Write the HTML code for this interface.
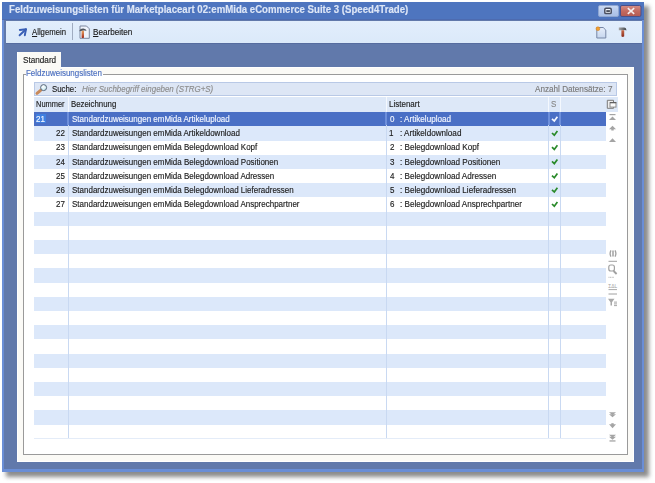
<!DOCTYPE html>
<html><head><meta charset="utf-8">
<style>
*{margin:0;padding:0;box-sizing:border-box}
html,body{width:655px;height:483px;overflow:hidden;background:#fff;font-family:"Liberation Sans",sans-serif}
.a{position:absolute}
.t{white-space:nowrap;transform-origin:0 0;-webkit-text-stroke:0.15px currentColor}
svg{position:absolute;overflow:visible}
</style></head><body>
<div class="a" style="left:6px;top:6px;width:643px;height:471px;background:#808080;filter:blur(2px);opacity:.9"></div>
<div class="a" style="left:2px;top:2px;width:642px;height:470px;background:#6a8ed6;"></div>
<div class="a" style="left:4px;top:20px;width:638px;height:449px;background:#6179ab;"></div>
<div class="a" style="left:2px;top:2px;width:642px;height:18px;background:#4e75bf;"></div>
<svg style="left:0;top:0" width="655" height="483" viewBox="0 0 655 483"><defs><linearGradient id="rb" x1="0" y1="0" x2="0" y2="1"><stop offset="0" stop-color="#cbdaf2"/><stop offset=".5" stop-color="#b6c9ec"/><stop offset="1" stop-color="#a9bfe6"/></linearGradient><linearGradient id="cb" x1="0" y1="0" x2="0" y2="1"><stop offset="0" stop-color="#d48f86"/><stop offset=".5" stop-color="#c46a60"/><stop offset="1" stop-color="#b35a52"/></linearGradient></defs><rect x="598.5" y="5.5" width="20" height="11" rx="1.5" fill="url(#rb)" stroke="#8fa6d2" stroke-width="1"/><rect x="604.8" y="8.3" width="6.4" height="5.3" rx="1.2" fill="#f2f6fc" stroke="#4a4f60" stroke-width="1.5"/><rect x="606.3" y="10.2" width="3.6" height="1.7" fill="#3a3f4c"/><rect x="620.5" y="5.5" width="20.5" height="11" rx="1.5" fill="url(#cb)" stroke="#49508a" stroke-width="1"/><path d="M627.8 8.2 L634.2 13.8 M634.2 8.2 L627.8 13.8" stroke="#f6eeee" stroke-width="1.6"/></svg>
<div class="a" style="left:6px;top:21px;width:636px;height:22px;background:linear-gradient(#e2eefc,#dbe9f9);"></div>
<div class="a" style="left:6px;top:43px;width:636px;height:1px;background:#566c9f;"></div>
<div class="a" style="left:2px;top:19px;width:642px;height:1px;background:#4d6bb0;"></div>
<svg style="left:0;top:0" width="655" height="483" viewBox="0 0 655 483"><path d="M26 29.3 L19.6 35.3" stroke="#3a5fb5" stroke-width="1.9" stroke-linecap="round"/><path d="M19.8 30 L26 29.2 L24.8 35.2" stroke="#3a5fb5" stroke-width="1.9" fill="none" stroke-linecap="round" stroke-linejoin="round"/></svg>
<div class="a" style="left:72px;top:23px;width:1px;height:17px;background:#a0acc0;"></div>
<svg style="left:0;top:0" width="655" height="483" viewBox="0 0 655 483"><defs><linearGradient id="hd" x1="0" y1="0" x2="0" y2="1"><stop offset="0" stop-color="#e8a060"/><stop offset="1" stop-color="#a02818"/></linearGradient></defs><path d="M80 26 H86.5 L89.3 28.8 V38.3 H80 Z" fill="#eef3fb" stroke="#7b879e" stroke-width="1"/><path d="M79.5 30.5 Q80.5 28.2 83.5 28.5 Q86 28.6 86.6 31 Q85.5 30.2 84 30.6 L79.5 31.2 Z" fill="#4f565e"/><path d="M81.6 30.8 H84 V37.6 Q82.8 38.6 81.6 37.6 Z" fill="url(#hd)"/></svg>
<svg style="left:0;top:0" width="655" height="483" viewBox="0 0 655 483"><defs><linearGradient id="nd" x1="0" y1="0" x2="0" y2="1"><stop offset="0" stop-color="#e6eefa"/><stop offset="1" stop-color="#c6d6ee"/></linearGradient></defs><path d="M596.8 27.5 H603.2 L605.8 30.1 V38 H596.8 Z" fill="url(#nd)" stroke="#7787a6" stroke-width="1"/><circle cx="597.9" cy="28.7" r="1.9" fill="#f0a030" stroke="#d07818" stroke-width=".5"/></svg>
<svg style="left:0;top:0" width="655" height="483" viewBox="0 0 655 483"><defs><linearGradient id="hm" x1="0" y1="0" x2="0" y2="1"><stop offset="0" stop-color="#c86a48"/><stop offset="1" stop-color="#8a2c1c"/></linearGradient><linearGradient id="hh" x1="0" y1="0" x2="1" y2="0"><stop offset="0" stop-color="#a8a8a8"/><stop offset="1" stop-color="#404448"/></linearGradient></defs><path d="M618.8 27.6 H624 Q626.4 27.6 626.4 30.6 Q625.4 29.6 623.6 30.3 H618.8 Z" fill="url(#hh)"/><path d="M621.4 30.2 H624.2 V36.2 Q622.8 37.6 621.4 36.2 Z" fill="url(#hm)"/></svg>
<div class="a" style="left:17px;top:67px;width:617px;height:395px;background:#fbfaf6;"></div>
<div class="a" style="left:17px;top:52px;width:44px;height:16px;background:#fbfaf6;"></div>
<div class="a" style="left:61px;top:67px;width:573px;height:1px;background:#ffffff;"></div>
<div class="a" style="left:17px;top:67px;width:1px;height:395px;background:#ffffff;"></div>
<div class="a" style="left:633px;top:67px;width:1px;height:395px;background:#ffffff;"></div>
<div class="a" style="left:17px;top:461px;width:617px;height:1px;background:#ffffff;"></div>
<div class="a" style="left:17px;top:52px;width:1px;height:15px;background:#ffffff;"></div>
<div class="a" style="left:23px;top:74px;width:604px;height:380px;background:#ffffff;"></div>
<div class="a" style="left:23px;top:74px;width:1px;height:380px;background:#9a9a9a;"></div>
<div class="a" style="left:23px;top:454px;width:605px;height:1px;background:#9a9a9a;"></div>
<div class="a" style="left:627px;top:74px;width:1px;height:381px;background:#9a9a9a;"></div>
<div class="a" style="left:23px;top:74px;width:3px;height:1px;background:#9a9a9a;"></div>
<div class="a" style="left:102.5px;top:74px;width:524.5px;height:1px;background:#9a9a9a;"></div>
<div class="a" style="left:34px;top:82px;width:583px;height:13.5px;background:#dde6f5;border:1px solid #b9c9e6"></div>
<svg style="left:0;top:0" width="655" height="483" viewBox="0 0 655 483"><defs><radialGradient id="lens" cx=".4" cy=".35" r=".7"><stop offset="0" stop-color="#ffffff"/><stop offset="1" stop-color="#bfe6ee"/></radialGradient></defs><path d="M40.6 90.4 L37 93.4" stroke="#c98a5a" stroke-width="3" stroke-linecap="round"/><circle cx="43.6" cy="87.6" r="3" fill="url(#lens)" stroke="#5a6678" stroke-width="1"/></svg>
<div class="a" style="left:34px;top:96.5px;width:572px;height:343px;background:#fff;"></div>
<div class="a" style="left:34px;top:97px;width:584px;height:15px;background:#dde8f8;"></div>
<div class="a" style="left:34px;top:112.2px;width:572px;height:14.2px;background:#4a6fc5;"></div>
<div class="a" style="left:34px;top:126.4px;width:572px;height:14.2px;background:#dce8fa;"></div>
<div class="a" style="left:34px;top:140.6px;width:572px;height:14.2px;background:#ffffff;"></div>
<div class="a" style="left:34px;top:154.8px;width:572px;height:14.2px;background:#dce8fa;"></div>
<div class="a" style="left:34px;top:169.0px;width:572px;height:14.2px;background:#ffffff;"></div>
<div class="a" style="left:34px;top:183.2px;width:572px;height:14.2px;background:#dce8fa;"></div>
<div class="a" style="left:34px;top:197.4px;width:572px;height:14.2px;background:#ffffff;"></div>
<div class="a" style="left:34px;top:211.6px;width:572px;height:14.2px;background:#dce8fa;"></div>
<div class="a" style="left:34px;top:225.8px;width:572px;height:14.2px;background:#ffffff;"></div>
<div class="a" style="left:34px;top:240.0px;width:572px;height:14.2px;background:#dce8fa;"></div>
<div class="a" style="left:34px;top:254.2px;width:572px;height:14.2px;background:#ffffff;"></div>
<div class="a" style="left:34px;top:268.4px;width:572px;height:14.2px;background:#dce8fa;"></div>
<div class="a" style="left:34px;top:282.6px;width:572px;height:14.2px;background:#ffffff;"></div>
<div class="a" style="left:34px;top:296.8px;width:572px;height:14.2px;background:#dce8fa;"></div>
<div class="a" style="left:34px;top:311.0px;width:572px;height:14.2px;background:#ffffff;"></div>
<div class="a" style="left:34px;top:325.2px;width:572px;height:14.2px;background:#dce8fa;"></div>
<div class="a" style="left:34px;top:339.4px;width:572px;height:14.2px;background:#ffffff;"></div>
<div class="a" style="left:34px;top:353.6px;width:572px;height:14.2px;background:#dce8fa;"></div>
<div class="a" style="left:34px;top:367.8px;width:572px;height:14.2px;background:#ffffff;"></div>
<div class="a" style="left:34px;top:382.0px;width:572px;height:14.2px;background:#dce8fa;"></div>
<div class="a" style="left:34px;top:396.2px;width:572px;height:14.2px;background:#ffffff;"></div>
<div class="a" style="left:34px;top:410.4px;width:572px;height:14.2px;background:#dce8fa;"></div>
<div class="a" style="left:34px;top:424.6px;width:572px;height:14.2px;background:#ffffff;"></div>
<div class="a" style="left:68px;top:112.2px;width:1px;height:326.59999999999997px;background:#c9d9f2;"></div>
<div class="a" style="left:68px;top:97px;width:1px;height:15px;background:#f4f8fe;"></div>
<div class="a" style="left:386px;top:112.2px;width:1px;height:326.59999999999997px;background:#c9d9f2;"></div>
<div class="a" style="left:386px;top:97px;width:1px;height:15px;background:#f4f8fe;"></div>
<div class="a" style="left:548px;top:112.2px;width:1px;height:326.59999999999997px;background:#c9d9f2;"></div>
<div class="a" style="left:548px;top:97px;width:1px;height:15px;background:#f4f8fe;"></div>
<div class="a" style="left:560px;top:112.2px;width:1px;height:326.59999999999997px;background:#c9d9f2;"></div>
<div class="a" style="left:560px;top:97px;width:1px;height:15px;background:#f4f8fe;"></div>
<div class="a" style="left:67px;top:112px;width:2px;height:12.5px;background:#6d8fdb;"></div>
<div class="a" style="left:385px;top:112px;width:2px;height:12.5px;background:#6d8fdb;"></div>
<div class="a" style="left:548px;top:112px;width:2px;height:12.5px;background:#6d8fdb;"></div>
<div class="a" style="left:559px;top:112px;width:2px;height:12.5px;background:#6d8fdb;"></div>
<div class="a" style="left:34px;top:438.29999999999995px;width:572px;height:1px;background:#e4ecf8;"></div>
<div class="a" style="left:35.7px;top:113.7px;width:10.5px;height:9.5px;background:#3f7fe0;"></div>
<svg style="left:0;top:0" width="655" height="483" viewBox="0 0 655 483"><path d="M552 118.80 L554.3 121.00 L557.4 116.80" stroke="#f4f7ff" stroke-width="1.7" fill="none"/></svg>
<svg style="left:0;top:0" width="655" height="483" viewBox="0 0 655 483"><path d="M552 133.00 L554.3 135.20 L557.4 131.00" stroke="#2a8a2a" stroke-width="1.7" fill="none"/></svg>
<svg style="left:0;top:0" width="655" height="483" viewBox="0 0 655 483"><path d="M552 147.20 L554.3 149.40 L557.4 145.20" stroke="#2a8a2a" stroke-width="1.7" fill="none"/></svg>
<svg style="left:0;top:0" width="655" height="483" viewBox="0 0 655 483"><path d="M552 161.40 L554.3 163.60 L557.4 159.40" stroke="#2a8a2a" stroke-width="1.7" fill="none"/></svg>
<svg style="left:0;top:0" width="655" height="483" viewBox="0 0 655 483"><path d="M552 175.60 L554.3 177.80 L557.4 173.60" stroke="#2a8a2a" stroke-width="1.7" fill="none"/></svg>
<svg style="left:0;top:0" width="655" height="483" viewBox="0 0 655 483"><path d="M552 189.80 L554.3 192.00 L557.4 187.80" stroke="#2a8a2a" stroke-width="1.7" fill="none"/></svg>
<svg style="left:0;top:0" width="655" height="483" viewBox="0 0 655 483"><path d="M552 204.00 L554.3 206.20 L557.4 202.00" stroke="#2a8a2a" stroke-width="1.7" fill="none"/></svg>
<svg style="left:0;top:0" width="655" height="483" viewBox="0 0 655 483"><path d="M607.3 100.3 H613.5 V108.3 H607.3 Z" fill="#ededed" stroke="#7a7a7a" stroke-width="1"/><rect x="610" y="102.5" width="6" height="4.6" fill="#fcfcfc" stroke="#8a8a8a" stroke-width="1"/><rect x="610" y="102" width="6.2" height="1.3" fill="#606060"/></svg>
<svg style="left:0;top:0" width="655" height="483" viewBox="0 0 655 483"><g fill="#a4a4a4"><rect x="609.5" y="114" width="6" height="1.2"/><path d="M609 120 L612.5 116.5 L616 120Z"/><path d="M609 129.3 L612.5 125.8 L616 129.3Z"/><rect x="611.3" y="128.5" width="2.4" height="2"/><path d="M609 142 L612.5 138.3 L616 142Z"/></g></svg>
<svg style="left:0;top:0" width="655" height="483" viewBox="0 0 655 483"><g fill="none" stroke="#a0a0a0"><path d="M611 250.3 Q609.2 253.4 611 256.6" stroke-width="1.3"/><path d="M615 250.3 Q616.8 253.4 615 256.6" stroke-width="1.3"/><path d="M613 250.5 V256.5" stroke-width="1.5"/><path d="M608.5 261.3 H617" stroke-width="1"/><rect x="608.8" y="265" width="5.6" height="6" rx="2" stroke-width="1.2"/><path d="M613.6 271 L616.6 274" stroke-width="1.8"/><path d="M608.5 277.3 H614" stroke-width=".8" stroke-dasharray="1 .6"/><path d="M608.5 294 H617" stroke-width="1"/><path d="M608.5 289.6 H617" stroke-width=".9"/></g><text x="608.2" y="288" font-size="5.6" fill="#a0a0a0" font-family="Liberation Sans" textLength="9" lengthAdjust="spacingAndGlyphs">ΣΔL</text><path d="M608 298.8 H614.5 L612 302.3 V305.6 H610.5 V302.3 Z" fill="#a8a8a8"/><g fill="#a8a8a8"><rect x="614" y="301.6" width="3" height="1"/><rect x="614" y="303.4" width="3" height="1"/><rect x="614" y="305.1" width="3" height="1"/></g></svg>
<svg style="left:0;top:0" width="655" height="483" viewBox="0 0 655 483"><g fill="#a4a4a4"><path d="M609 412.3 L612.5 415.3 L616 412.3Z"/><path d="M609 414.3 L612.5 417.3 L616 414.3Z"/><path d="M609 424.3 L612.5 428.3 L616 424.3Z"/><rect x="611.3" y="423.2" width="2.4" height="2"/><path d="M609 434.8 L612.5 437.8 L616 434.8Z"/><path d="M609 436.8 L612.5 439.8 L616 436.8Z"/><rect x="609.5" y="440.3" width="6" height="1.3"/></g></svg>
<div class="a t" style="left:9.12px;top:5.00px;font-size:10.2px;line-height:10.2px;color:#dde6f6;font-weight:bold;transform:scaleX(0.9452)">Feldzuweisungslisten für Marketplaceart 02:emMida eCommerce Suite 3 (Speed4Trade)</div>
<div class="a t" style="left:32.00px;top:28.00px;font-size:8.6px;line-height:8.6px;color:#1c1c1c;transform:scaleX(0.9013)"><u>A</u>llgemein</div>
<div class="a t" style="left:93.05px;top:28.00px;font-size:8.6px;line-height:8.6px;color:#1c1c1c;transform:scaleX(0.9474)"><u>B</u>earbeiten</div>
<div class="a t" style="left:22.97px;top:56.00px;font-size:8.6px;line-height:8.6px;color:#222;transform:scaleX(0.9508)">Standard</div>
<div class="a t" style="left:26.36px;top:69.00px;font-size:8.6px;line-height:8.6px;color:#4a6ec0;transform:scaleX(0.9284)">Feldzuweisungslisten</div>
<div class="a t" style="left:52.29px;top:85.00px;font-size:8.6px;line-height:8.6px;color:#1c1c1c;transform:scaleX(0.9114)">Suche:</div>
<div class="a t" style="left:82.46px;top:85.00px;font-size:8.6px;line-height:8.6px;color:#8c8c8c;font-style:italic;transform:scaleX(0.9237)">Hier Suchbegriff eingeben (STRG+S)</div>
<div class="a t" style="left:535.30px;top:85.00px;font-size:8.6px;line-height:8.6px;color:#7a7a7a;transform:scaleX(0.9477)">Anzahl Datensätze: 7</div>
<div class="a t" style="left:35.50px;top:100.00px;font-size:8.7px;line-height:8.7px;color:#1c1c1c;transform:scaleX(0.8573)">Nummer</div>
<div class="a t" style="left:71.07px;top:100.00px;font-size:8.7px;line-height:8.7px;color:#1c1c1c;transform:scaleX(0.9019)">Bezeichnung</div>
<div class="a t" style="left:388.86px;top:100.00px;font-size:8.7px;line-height:8.7px;color:#1c1c1c;transform:scaleX(0.9200)">Listenart</div>
<div class="a t" style="left:550.68px;top:100.00px;font-size:8.7px;line-height:8.7px;color:#8a8a8a;transform:scaleX(0.9200)">S</div>
<div class="a t" style="left:35.90px;top:115.00px;font-size:8.7px;line-height:8.7px;color:#f2f6ff;transform:scaleX(0.9200)">21</div>
<div class="a t" style="left:71.68px;top:115.00px;font-size:8.7px;line-height:8.7px;color:#f2f6ff;transform:scaleX(0.9200)">Standardzuweisungen emMida Artikelupload</div>
<div class="a t" style="left:389.76px;top:115.00px;font-size:8.7px;line-height:8.7px;color:#f2f6ff;transform:scaleX(0.9200)">0</div>
<div class="a t" style="left:399.77px;top:115.00px;font-size:8.7px;line-height:8.7px;color:#f2f6ff;transform:scaleX(0.9350)">: Artikelupload</div>
<div class="a t" style="left:56.47px;top:129.00px;font-size:8.7px;line-height:8.7px;color:#1c1c1c;transform:scaleX(0.9200)">22</div>
<div class="a t" style="left:71.68px;top:129.00px;font-size:8.7px;line-height:8.7px;color:#1c1c1c;transform:scaleX(0.9200)">Standardzuweisungen emMida Artikeldownload</div>
<div class="a t" style="left:389.44px;top:129.00px;font-size:8.7px;line-height:8.7px;color:#1c1c1c;transform:scaleX(0.9200)">1</div>
<div class="a t" style="left:399.77px;top:129.00px;font-size:8.7px;line-height:8.7px;color:#1c1c1c;transform:scaleX(0.9350)">: Artikeldownload</div>
<div class="a t" style="left:56.39px;top:143.00px;font-size:8.7px;line-height:8.7px;color:#1c1c1c;transform:scaleX(0.9200)">23</div>
<div class="a t" style="left:71.68px;top:143.00px;font-size:8.7px;line-height:8.7px;color:#1c1c1c;transform:scaleX(0.9200)">Standardzuweisungen emMida Belegdownload Kopf</div>
<div class="a t" style="left:389.60px;top:143.00px;font-size:8.7px;line-height:8.7px;color:#1c1c1c;transform:scaleX(0.9200)">2</div>
<div class="a t" style="left:399.77px;top:143.00px;font-size:8.7px;line-height:8.7px;color:#1c1c1c;transform:scaleX(0.9350)">: Belegdownload Kopf</div>
<div class="a t" style="left:56.31px;top:158.00px;font-size:8.7px;line-height:8.7px;color:#1c1c1c;transform:scaleX(0.9200)">24</div>
<div class="a t" style="left:71.68px;top:158.00px;font-size:8.7px;line-height:8.7px;color:#1c1c1c;transform:scaleX(0.9200)">Standardzuweisungen emMida Belegdownload Positionen</div>
<div class="a t" style="left:389.76px;top:158.00px;font-size:8.7px;line-height:8.7px;color:#1c1c1c;transform:scaleX(0.9200)">3</div>
<div class="a t" style="left:399.77px;top:158.00px;font-size:8.7px;line-height:8.7px;color:#1c1c1c;transform:scaleX(0.9350)">: Belegdownload Positionen</div>
<div class="a t" style="left:56.39px;top:172.00px;font-size:8.7px;line-height:8.7px;color:#1c1c1c;transform:scaleX(0.9200)">25</div>
<div class="a t" style="left:71.68px;top:172.00px;font-size:8.7px;line-height:8.7px;color:#1c1c1c;transform:scaleX(0.9200)">Standardzuweisungen emMida Belegdownload Adressen</div>
<div class="a t" style="left:389.84px;top:172.00px;font-size:8.7px;line-height:8.7px;color:#1c1c1c;transform:scaleX(0.9200)">4</div>
<div class="a t" style="left:399.77px;top:172.00px;font-size:8.7px;line-height:8.7px;color:#1c1c1c;transform:scaleX(0.9350)">: Belegdownload Adressen</div>
<div class="a t" style="left:56.39px;top:186.00px;font-size:8.7px;line-height:8.7px;color:#1c1c1c;transform:scaleX(0.9200)">26</div>
<div class="a t" style="left:71.68px;top:186.00px;font-size:8.7px;line-height:8.7px;color:#1c1c1c;transform:scaleX(0.9200)">Standardzuweisungen emMida Belegdownload Lieferadressen</div>
<div class="a t" style="left:389.68px;top:186.00px;font-size:8.7px;line-height:8.7px;color:#1c1c1c;transform:scaleX(0.9200)">5</div>
<div class="a t" style="left:399.77px;top:186.00px;font-size:8.7px;line-height:8.7px;color:#1c1c1c;transform:scaleX(0.9350)">: Belegdownload Lieferadressen</div>
<div class="a t" style="left:56.47px;top:200.00px;font-size:8.7px;line-height:8.7px;color:#1c1c1c;transform:scaleX(0.9200)">27</div>
<div class="a t" style="left:71.68px;top:200.00px;font-size:8.7px;line-height:8.7px;color:#1c1c1c;transform:scaleX(0.9200)">Standardzuweisungen emMida Belegdownload Ansprechpartner</div>
<div class="a t" style="left:389.60px;top:200.00px;font-size:8.7px;line-height:8.7px;color:#1c1c1c;transform:scaleX(0.9200)">6</div>
<div class="a t" style="left:399.77px;top:200.00px;font-size:8.7px;line-height:8.7px;color:#1c1c1c;transform:scaleX(0.9350)">: Belegdownload Ansprechpartner</div>
</body></html>
